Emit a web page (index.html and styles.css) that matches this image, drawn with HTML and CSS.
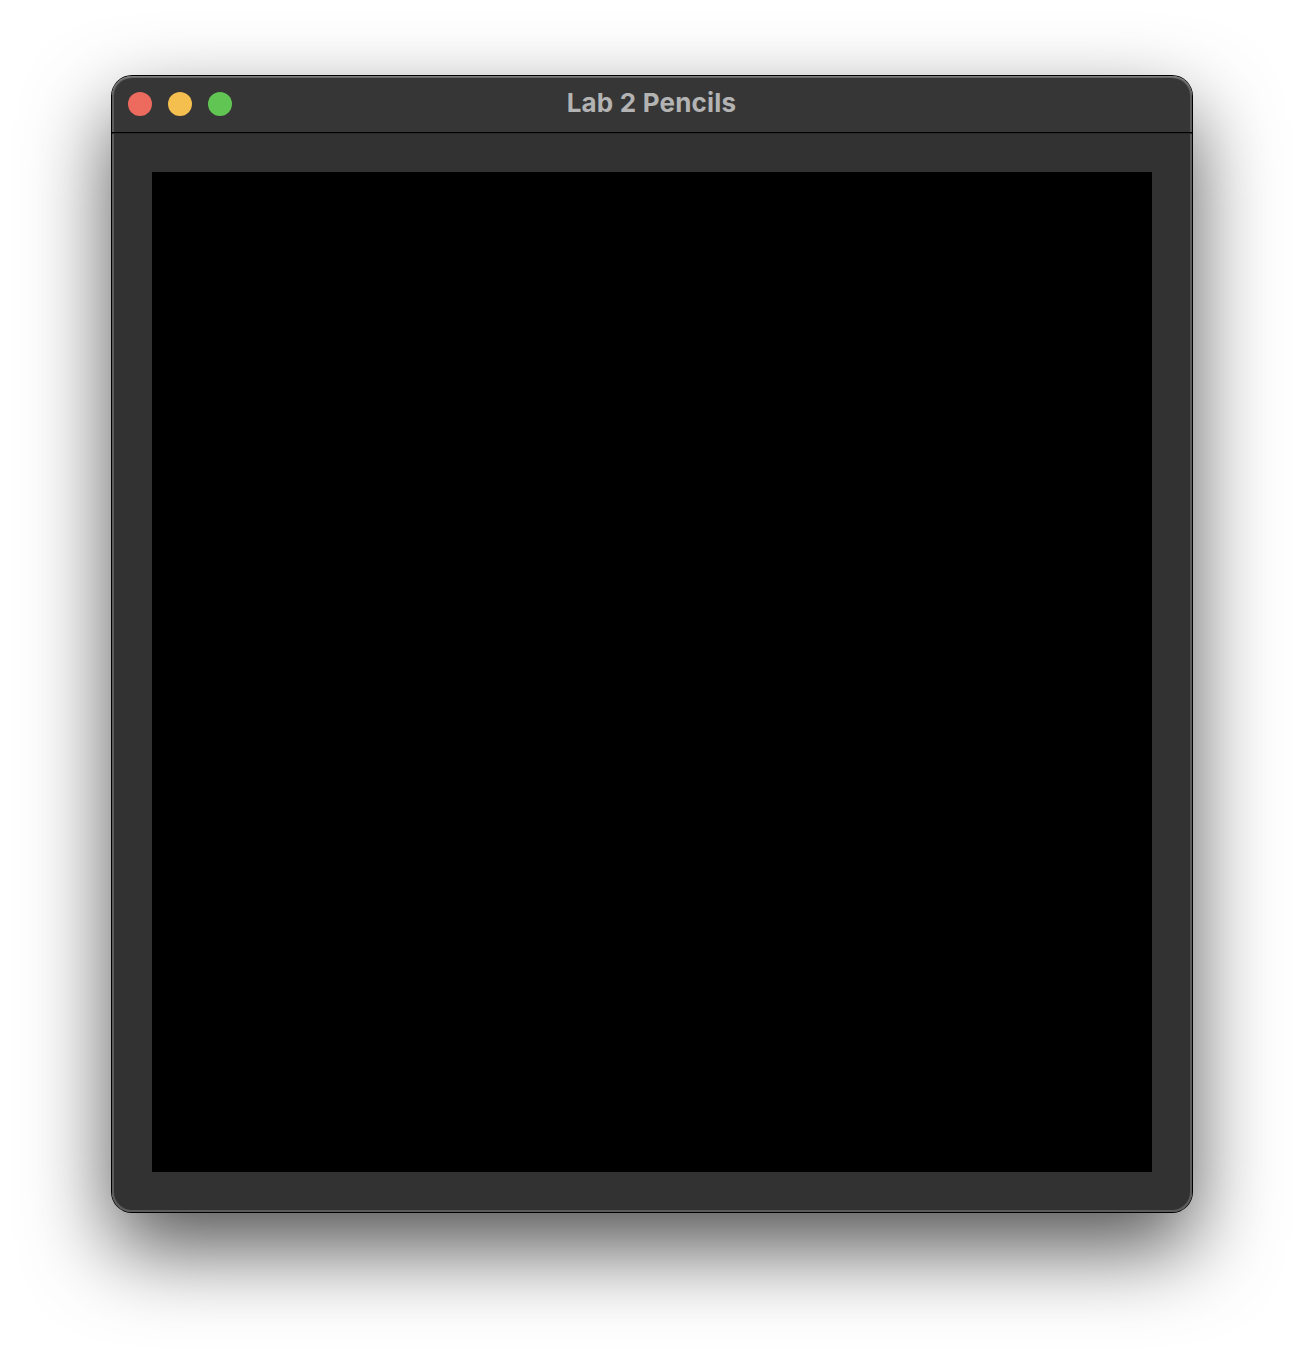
FILE: index.html
```html
<!DOCTYPE html>
<html lang="en">
<head>
<meta charset="utf-8">
<title>Lab 2 Pencils</title>
<link rel="stylesheet" href="styles.css">
</head>
<body>
<main class="window">
  <header class="titlebar">
    <div class="controls">
      <span class="control close"></span>
      <span class="control minimize"></span>
      <span class="control zoom"></span>
    </div>
    <h1 class="title">Lab 2 Pencils</h1>
  </header>
  <section class="content">
    <div class="canvas"></div>
  </section>
</main>
</body>
</html>
```

FILE: styles.css
```css
* { box-sizing: border-box; }
html { background: #fff; }
body {
  margin: 0;
  height: 1360px;
  padding: 76px 112px 148px;
  overflow: hidden;
  font-family: Inter, "Liberation Sans", sans-serif;
}
.window {
  display: flex;
  flex-direction: column;
  height: 1136px;
  border-radius: 20px;
  background: linear-gradient(#363636 56px, #323232 56px);
  box-shadow:
    inset 0 1px 0 #7e7e7e,
    inset 0 2px 0 #666,
    inset 0 0 0 2px #5c5c5c,
    0 0 0 1px #000,
    0 36px 84px rgba(0, 0, 0, .68);
}
.titlebar {
  display: grid;
  grid-template-columns: 1fr auto 1fr;
  align-items: start;
  height: 57px;
  padding: 0 16px;
  border-bottom: 1px solid #000;
  box-shadow: 0 1px 0 #2a2a2a;
}
.controls { display: flex; gap: 16px; padding-top: 16px; }
.control { width: 24px; height: 24px; border-radius: 50%; }
.close { background: #ed6a5e; }
.minimize { background: #f5bf4f; }
.zoom { background: #61c554; }
.title {
  margin: 11px 1px 0 0;
  font-size: 26px;
  line-height: 32px;
  font-weight: 700;
  letter-spacing: .2px;
  color: #b3b3b3;
}
.content { flex: 1; padding: 39px 40px 40px; }
.canvas { height: 1000px; background: #000; }
```
